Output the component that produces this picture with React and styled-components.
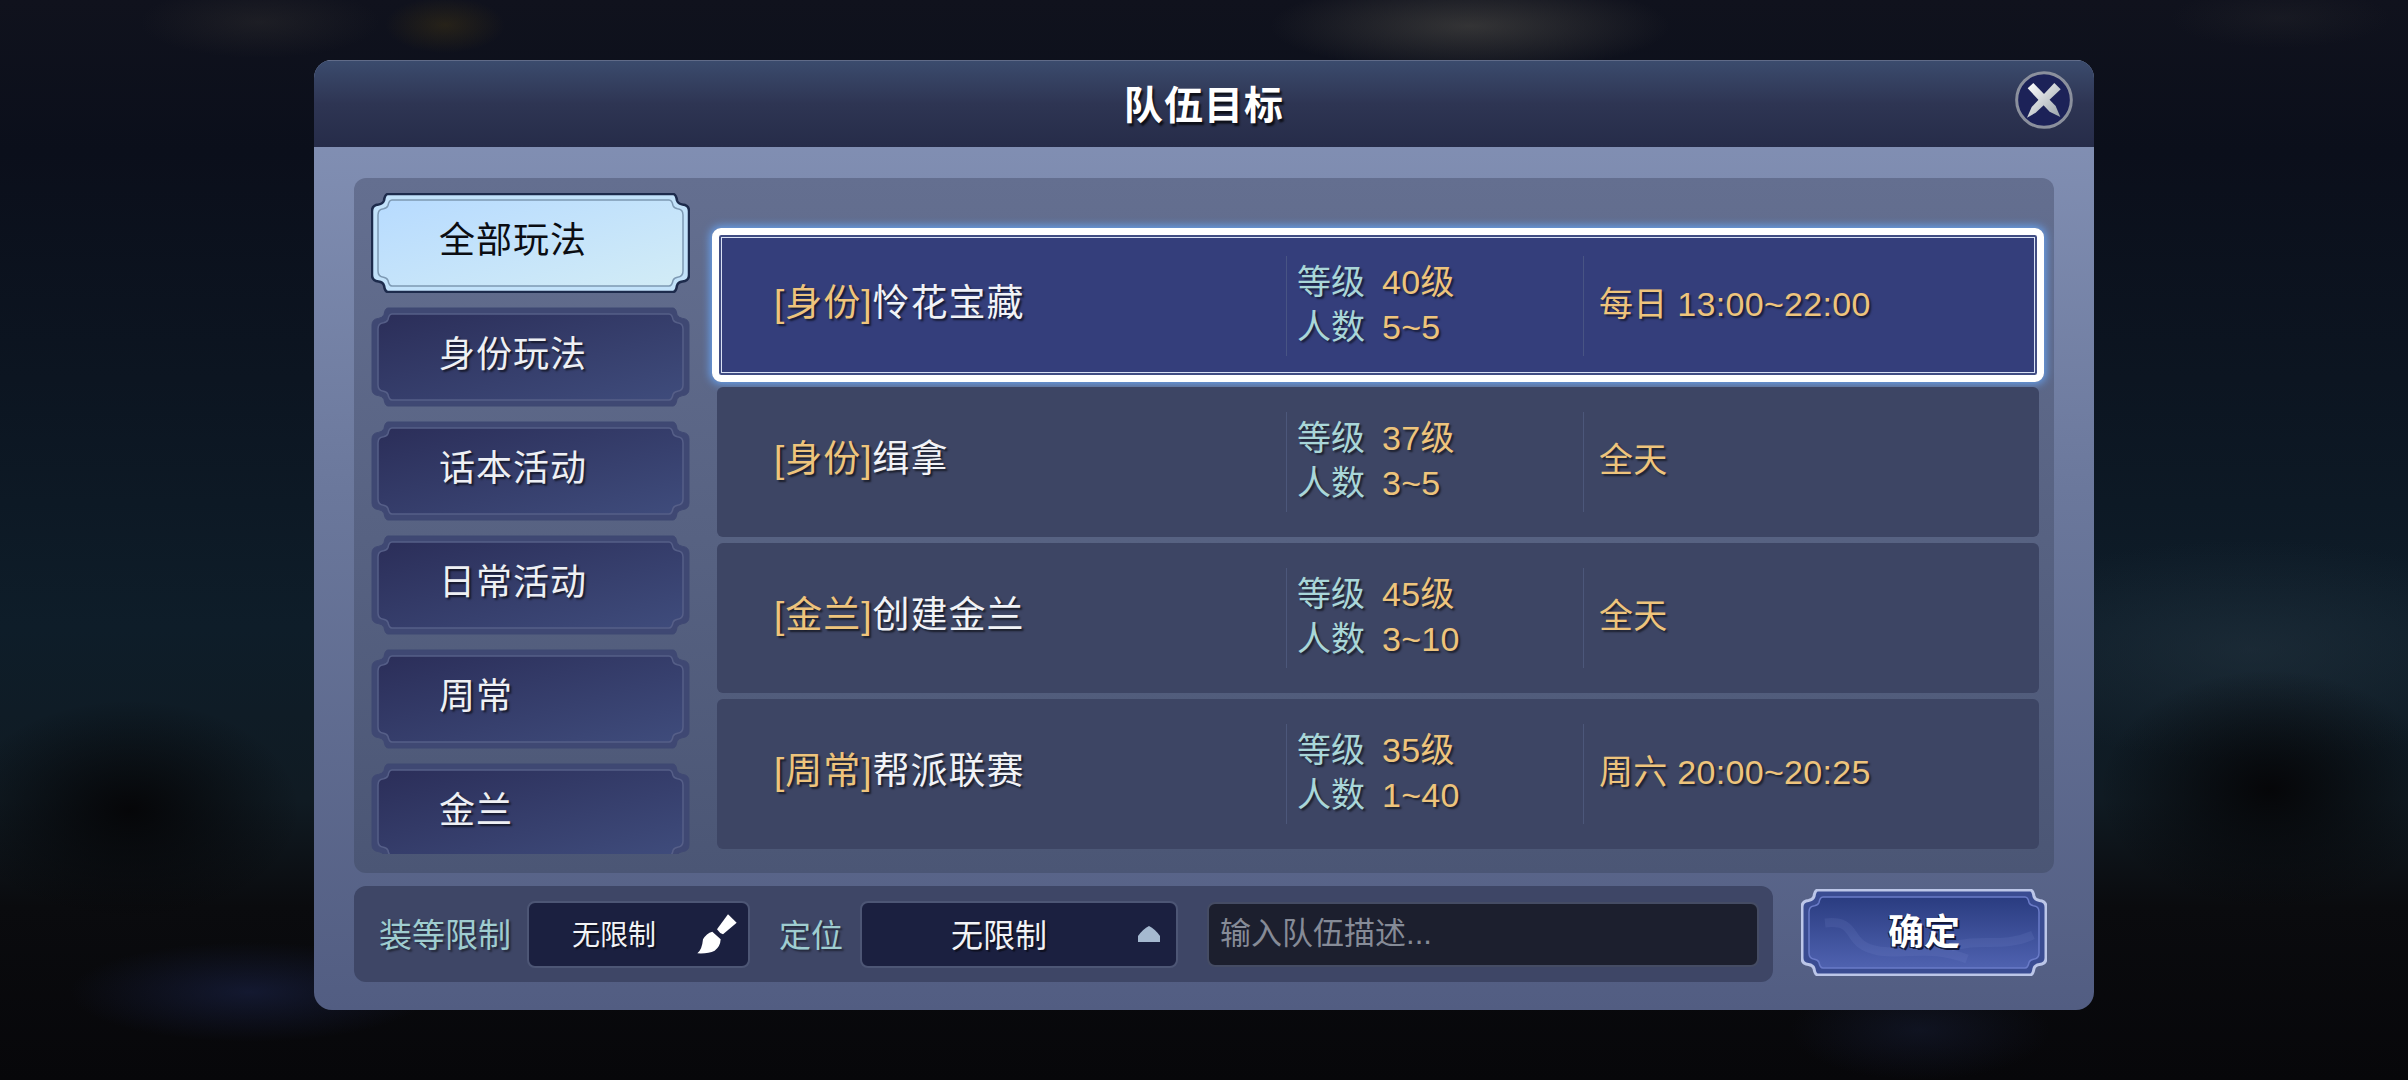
import React, { useId } from "react";
import styled, { createGlobalStyle } from "styled-components";

const FONT = `"Liberation Sans", "Noto Sans CJK SC", sans-serif`;

const GlobalStyle = createGlobalStyle`
  html, body {
    margin: 0;
    padding: 0;
    background: #08090d;
  }
  * {
    box-sizing: border-box;
  }
`;

const Page = styled.div`
  width: 2408px;
  height: 1080px;
  overflow: hidden;
  display: flex;
  justify-content: center;
  padding-top: 60px;
  font-family: ${FONT};
  background:
    radial-gradient(ellipse 120px 36px at 260px 22px, rgba(70, 66, 60, 0.25), transparent),
    radial-gradient(ellipse 60px 28px at 445px 25px, rgba(92, 72, 16, 0.3), transparent),
    radial-gradient(ellipse 200px 46px at 1470px 26px, rgba(120, 116, 100, 0.35), transparent),
    radial-gradient(ellipse 110px 30px at 2280px 18px, rgba(60, 60, 60, 0.18), transparent),
    radial-gradient(ellipse 180px 50px at 250px 992px, rgba(30, 40, 84, 0.5), transparent),
    radial-gradient(ellipse 130px 50px at 1920px 1030px, rgba(30, 40, 74, 0.35), transparent),
    radial-gradient(ellipse 170px 110px at 130px 810px, rgba(5, 5, 7, 0.95), transparent),
    radial-gradient(ellipse 170px 120px at 2270px 790px, rgba(5, 5, 7, 0.95), transparent),
    radial-gradient(ellipse 300px 110px at 2250px 650px, rgba(38, 54, 66, 0.5), transparent),
    linear-gradient(
      to bottom,
      #10121d 0%,
      #0b0f1b 14%,
      #0c1521 35%,
      #0e1d29 58%,
      #101b23 74%,
      #0a0b0e 84%,
      #07070a 100%
    );
`;

const Modal = styled.div`
  width: 1780px;
  height: 950px;
  border-radius: 18px;
  overflow: hidden;
  display: flex;
  flex-direction: column;
  background: linear-gradient(to bottom, #8694b8 0%, #6b789c 45%, #525d82 100%);
`;

const Header = styled.div`
  position: relative;
  height: 87px;
  flex: none;
  display: flex;
  align-items: center;
  justify-content: center;
  padding-bottom: 5px;
  border-top: 1px solid #606b88;
  background: linear-gradient(to bottom, #3b4b6d 0%, #2e3553 50%, #262c49 100%);
`;

const Title = styled.h1`
  margin: 0;
  font-size: 39px;
  font-weight: 700;
  letter-spacing: 1px;
  color: #fff;
  text-shadow: 2px 3px 2px rgba(0, 0, 0, 0.7);
`;

const CloseButton = styled.div`
  position: absolute;
  top: 10px;
  right: 21px;
  width: 58px;
  height: 58px;
`;

const Body = styled.div`
  flex: 1;
  display: flex;
  flex-direction: column;
  gap: 13px;
  padding: 31px 40px 28px;
`;

const Panel = styled.div`
  height: 695px;
  flex: none;
  display: flex;
  gap: 27px;
  padding: 15px 15px 0 17px;
  border-radius: 12px;
  background: linear-gradient(to bottom, #646f90 0%, #4b5675 100%);
`;

const TabList = styled.div`
  width: 319px;
  height: 661px;
  flex: none;
  overflow: hidden;
  display: flex;
  flex-direction: column;
  gap: 14px;
`;

const Tab = styled.div`
  position: relative;
  flex: none;
  width: 319px;
  height: 100px;
  display: flex;
  align-items: center;
  padding: 0 0 12px 68px;
  font-size: 36px;
  letter-spacing: 1px;
  color: ${(p) => (p.$active ? "#0b0d12" : "#eef0f4")};
  text-shadow: ${(p) => (p.$active ? "none" : "2px 2px 2px rgba(0, 0, 0, 0.6)")};
`;

const FrameSvg = styled.svg`
  position: absolute;
  inset: 0;
`;

const TabLabel = styled.span`
  position: relative;
`;

const RowList = styled.div`
  flex: 1;
  display: flex;
  flex-direction: column;
  gap: 6px;
  padding-top: 38px;
`;

const Row = styled.div`
  position: relative;
  height: 150px;
  flex: none;
  display: grid;
  grid-template-columns: 569px 297px 1fr;
  align-items: center;
  border-radius: 6px;
  background: ${(p) => (p.$selected ? "#343e7b" : "#3d4564")};

  ${(p) =>
    p.$selected &&
    `
    &::after {
      content: "";
      position: absolute;
      top: -3px;
      left: -5px;
      right: -5px;
      bottom: -1px;
      border: 7px solid #fff;
      border-radius: 9px;
      box-shadow:
        0 0 9px 2px rgba(105, 170, 255, 0.85),
        inset 0 0 0 2px #414d83,
        inset 0 0 0 3px #d9e1f4;
    }
  `}
`;

const NameCell = styled.div`
  padding: 0 0 12px 57px;
  font-size: 37px;
  letter-spacing: 1px;
  color: #f1f3f7;
  text-shadow: 2px 2px 2px rgba(0, 0, 0, 0.6);
`;

const Gold = styled.span`
  color: #eec47c;
`;

const InfoCell = styled.div`
  height: 100px;
  display: flex;
  flex-direction: column;
  justify-content: center;
  padding: 0 0 3px ${(p) => p.$pad}px;
  border-left: 1px solid rgba(90, 102, 140, 0.55);
  font-size: 34px;
  line-height: 45px;
  text-shadow: 2px 2px 2px rgba(0, 0, 0, 0.55);
`;

const InfoLine = styled.div`
  display: flex;
  gap: 17px;
`;

const InfoLabel = styled.span`
  color: #a9d6d8;
`;

const InfoValue = styled.span`
  color: #eec47c;
  letter-spacing: 0.3px;
`;

const Footer = styled.div`
  flex: 1;
  display: flex;
  gap: 28px;
`;

const FilterBar = styled.div`
  width: 1419px;
  display: flex;
  align-items: center;
  padding: 0 14px 0 25px;
  border-radius: 12px;
  background: #3e4666;
`;

const FilterLabel = styled.span`
  flex: none;
  margin: 0 ${(p) => p.$gap}px 3px 0;
  font-size: ${(p) => p.$size}px;
  color: #9fcdd0;
  text-shadow: 2px 2px 2px rgba(0, 0, 0, 0.45);
`;

const Select = styled.div`
  flex: none;
  width: ${(p) => p.$width}px;
  height: 67px;
  margin-right: 29px;
  display: flex;
  align-items: center;
  justify-content: space-between;
  padding: 0 ${(p) => p.$right}px 0 ${(p) => p.$left}px;
  border: 2px solid #4d5675;
  border-radius: 8px;
  background: #1b2040;
  font-size: ${(p) => p.$size}px;
  color: #f2f3f6;
  text-shadow: 2px 2px 1px rgba(0, 0, 0, 0.5);
`;

const SelectText = styled.span`
  margin-bottom: 3px;
`;

const DescBox = styled.div`
  flex: 1;
  height: 65px;
  display: flex;
  align-items: center;
  padding: 0 0 8px 11px;
  border: 2px solid #454c64;
  border-radius: 8px;
  background: #1c1f2e;
  font-size: 31px;
  color: #868b97;
`;

const ConfirmButton = styled.div`
  position: relative;
  width: 246px;
  height: 87px;
  margin-top: 3px;
  display: flex;
  align-items: center;
  justify-content: center;
  padding-bottom: 8px;
  font-size: 36px;
  font-weight: 700;
  color: #fff;
  text-shadow: 2px 2px 0 #141a3c, -1px 1px 0 #141a3c;
`;

// top edge, stepped corner, side, stepped corner ... clockwise from top left
const framePath = (x, y, w, h, a) => {
  const r = x + w;
  const b = y + h;
  return [
    `M${x + a + 3} ${y}`,
    `H${r - a - 3}`,
    `Q${r - a} ${y} ${r - a + 1} ${y + a * 0.5}`,
    `Q${r - a + 2} ${y + a * 0.75} ${r - a * 0.5} ${y + a * 0.8}`,
    `Q${r} ${y + a * 0.85} ${r} ${y + a + 4}`,
    `V${b - a - 4}`,
    `Q${r} ${b - a * 0.85} ${r - a * 0.5} ${b - a * 0.8}`,
    `Q${r - a + 2} ${b - a * 0.75} ${r - a + 1} ${b - a * 0.5}`,
    `Q${r - a} ${b} ${r - a - 3} ${b}`,
    `H${x + a + 3}`,
    `Q${x + a} ${b} ${x + a - 1} ${b - a * 0.5}`,
    `Q${x + a - 2} ${b - a * 0.75} ${x + a * 0.5} ${b - a * 0.8}`,
    `Q${x} ${b - a * 0.85} ${x} ${b - a - 4}`,
    `V${y + a + 4}`,
    `Q${x} ${y + a * 0.85} ${x + a * 0.5} ${y + a * 0.8}`,
    `Q${x + a - 2} ${y + a * 0.75} ${x + a - 1} ${y + a * 0.5}`,
    `Q${x + a} ${y} ${x + a + 3} ${y}`,
    "Z",
  ].join(" ");
};

const Frame = ({ w, h, from, to, edge, edgeWidth, band, line, lineInset, vertical, swirl }) => {
  const id = useId();
  const inset = lineInset;
  return (
    <FrameSvg width={w} height={h} viewBox={`0 0 ${w} ${h}`}>
      <defs>
        <linearGradient id={id} x1="0" y1="0" x2={vertical ? "0" : "1"} y2="1">
          <stop offset="0" stopColor={from} />
          <stop offset="1" stopColor={to} />
        </linearGradient>
      </defs>
      <path
        d={framePath(1, 1, w - 2, h - 2, 13)}
        fill={band}
        stroke={edge}
        strokeWidth={edgeWidth}
      />
      <path
        d={framePath(inset, inset, w - inset * 2, h - inset * 2, 11)}
        fill={`url(#${id})`}
        stroke={line}
        strokeWidth="1.5"
      />
      {swirl && (
        <g fill="none" stroke="#8fa0dc" strokeOpacity="0.12" strokeWidth="9">
          <path d="M24 34 C60 30 42 56 78 62 C110 66 130 56 166 70" />
          <path d="M150 58 C180 48 200 60 232 46" />
        </g>
      )}
    </FrameSvg>
  );
};

const CloseIcon = () => {
  const id = useId();
  return (
    <svg width="58" height="58" viewBox="0 0 174 174">
      <defs>
        <linearGradient id={id} x1="0" y1="0" x2="1" y2="1">
          <stop offset="0" stopColor="#ffffff" />
          <stop offset="1" stopColor="#9aa4aa" />
        </linearGradient>
      </defs>
      <circle cx="87" cy="87" r="82" fill="#1c2258" stroke="#8b909d" strokeWidth="9" />
      <path d="M38 52 L55 36 L122 105 L136 138 L104 122 Z" fill={`url(#${id})`} />
      <path d="M118 36 L137 55 L62 125 L36 140 L50 108 Z" fill={`url(#${id})`} />
    </svg>
  );
};

const BrushIcon = () => (
  <svg width="40" height="40" viewBox="112 102 120 120" fill="#fff">
    <path d="M172 148 L205 103 L231 128 L190 163 Q180 160 172 148 Z" />
    <path d="M113 220 Q127 210 130 178 Q140 160 158 155 L183 178 Q182 200 165 212 Q145 222 113 220 Z" />
  </svg>
);

const ArrowIcon = () => (
  <svg width="22" height="16" viewBox="0 0 22 16" fill="#a5b9d0">
    <path d="M0 16 L22 16 L22 10 Q17 3 11 0 Q5 3 0 10 Z" />
  </svg>
);

const tabs = ["全部玩法", "身份玩法", "话本活动", "日常活动", "周常", "金兰"];

const rows = [
  { tag: "[身份]", name: "怜花宝藏", level: "40级", count: "5~5", time: "每日 13:00~22:00" },
  { tag: "[身份]", name: "缉拿", level: "37级", count: "3~5", time: "全天" },
  { tag: "[金兰]", name: "创建金兰", level: "45级", count: "3~10", time: "全天" },
  { tag: "[周常]", name: "帮派联赛", level: "35级", count: "1~40", time: "周六 20:00~20:25" },
];

export default function App() {
  return (
    <Page>
      <GlobalStyle />
      <Modal>
        <Header>
          <Title>队伍目标</Title>
          <CloseButton>
            <CloseIcon />
          </CloseButton>
        </Header>
        <Body>
          <Panel>
            <TabList>
              {tabs.map((t, i) => (
                <Tab key={t} $active={i === 0}>
                  {i === 0 ? (
                    <Frame
                      w={319}
                      h={100}
                      from="#b7dbff"
                      to="#d2ecf6"
                      band="#c2e2fa"
                      edge="#1d2b4c"
                      edgeWidth={2.5}
                      line="#7d99b3"
                      lineInset={7}
                    />
                  ) : (
                    <Frame
                      w={319}
                      h={100}
                      from="#2b2e59"
                      to="#3f4c7c"
                      band="#3f4873"
                      edge="#3f4873"
                      edgeWidth={1}
                      line="#565f88"
                      lineInset={7}
                    />
                  )}
                  <TabLabel>{t}</TabLabel>
                </Tab>
              ))}
            </TabList>
            <RowList>
              {rows.map((r, i) => (
                <Row key={r.tag + r.name} $selected={i === 0}>
                  <NameCell>
                    <Gold>{r.tag}</Gold>
                    {r.name}
                  </NameCell>
                  <InfoCell $pad={10}>
                    <InfoLine>
                      <InfoLabel>等级</InfoLabel>
                      <InfoValue>{r.level}</InfoValue>
                    </InfoLine>
                    <InfoLine>
                      <InfoLabel>人数</InfoLabel>
                      <InfoValue>{r.count}</InfoValue>
                    </InfoLine>
                  </InfoCell>
                  <InfoCell $pad={15}>
                    <InfoValue>{r.time}</InfoValue>
                  </InfoCell>
                </Row>
              ))}
            </RowList>
          </Panel>
          <Footer>
            <FilterBar>
              <FilterLabel $size={33} $gap={16}>装等限制</FilterLabel>
              <Select $width={223} $left={43} $right={11} $size={28}>
                <SelectText>无限制</SelectText>
                <BrushIcon />
              </Select>
              <FilterLabel $size={32} $gap={17}>定位</FilterLabel>
              <Select $width={318} $left={89} $right={16} $size={32}>
                <SelectText>无限制</SelectText>
                <ArrowIcon />
              </Select>
              <DescBox>输入队伍描述...</DescBox>
            </FilterBar>
            <ConfirmButton>
              <Frame
                w={246}
                h={87}
                from="#2a3c80"
                to="#4f62b0"
                band="#3a4c92"
                edge="#bcc6e8"
                edgeWidth={3}
                line="#6a7bc8"
                lineInset={8}
                vertical
                swirl
              />
              <TabLabel>确定</TabLabel>
            </ConfirmButton>
          </Footer>
        </Body>
      </Modal>
    </Page>
  );
}
